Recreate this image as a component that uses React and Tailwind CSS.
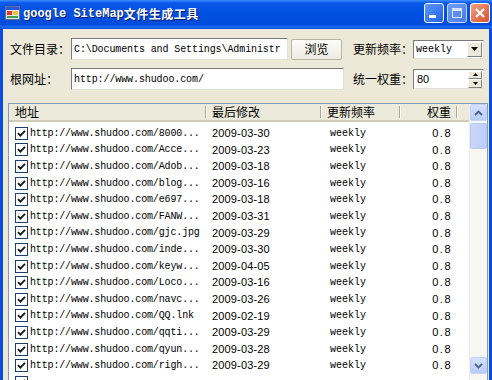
import React from "react";

const rows = [
  ["8000...", "2009-03-30"],
  ["Acce...", "2009-03-23"],
  ["Adob...", "2009-03-18"],
  ["blog...", "2009-03-16"],
  ["e697...", "2009-03-18"],
  ["FANW...", "2009-03-31"],
  ["gjc.jpg", "2009-03-29"],
  ["inde...", "2009-03-30"],
  ["keyw...", "2009-04-05"],
  ["Loco...", "2009-03-16"],
  ["navc...", "2009-03-26"],
  ["QQ.lnk", "2009-02-19"],
  ["qqti...", "2009-03-29"],
  ["qyun...", "2009-03-28"],
  ["righ...", "2009-03-29"],
];

const cjk = { fontFamily: '"Noto Sans CJK SC", "Noto Sans", sans-serif' };
const mono = { fontFamily: '"Liberation Mono", "DejaVu Sans Mono", monospace' };
const sans = { fontFamily: '"Liberation Sans", Arial, sans-serif' };

function Check() {
  return (
    <div className="w-[13px] h-[13px] border border-[#1C3F6E] bg-white flex items-center justify-center shrink-0">
      <svg width="9" height="9" viewBox="0 0 9 9">
        <path d="M1 4.2 L3.4 6.6 L8 1.8" fill="none" stroke="#1a1a1a" strokeWidth="1.9" />
      </svg>
    </div>
  );
}

function Sep() {
  return <div className="w-[2px] h-[12px] border-l border-[#ACA899] bg-white shrink-0" />;
}

function ScrollBtn({ up }) {
  return (
    <div className="h-[17px] w-full rounded-[2px] border border-[#C3D3FD] bg-[linear-gradient(to_bottom,#D5E2FE,#B6CBF9)] flex items-center justify-center">
      <svg width="9" height="6" viewBox="0 0 9 6">
        <path d={up ? "M1 5 L4.5 1.5 L8 5" : "M1 1 L4.5 4.5 L8 1"} fill="none" stroke="#4D6185" strokeWidth="1.8" />
      </svg>
    </div>
  );
}

export default function App() {
  return (
    <div className="w-[492px] h-[380px] overflow-hidden bg-[#0A4CDF] flex flex-col">
      {/* Title bar */}
      <div className="h-[29px] shrink-0 flex items-start bg-[linear-gradient(to_bottom,#3B8EFB_0%,#0A58E8_10%,#0050E0_50%,#004CDC_85%,#1C6CF2_93%,#0A48D8_100%)]">
        <div className="ml-[5px] mt-[6px] w-[15px] h-[14px]">
          <svg width="15" height="14" viewBox="0 0 15 14">
            <rect x="0.5" y="0.5" width="14" height="13" fill="#E8E8F0" stroke="#6A6A8A" />
            <rect x="1" y="1" width="13" height="3" fill="#2A5ADA" />
            <rect x="2" y="5" width="5" height="4" fill="#E23A2A" />
            <rect x="8" y="5" width="5" height="4" fill="#F3C234" />
            <rect x="2" y="10" width="11" height="2" fill="#3AA04A" />
          </svg>
        </div>
        <div className="ml-[3px] mt-[5px] flex items-center text-white font-bold leading-none h-[17px]" style={{ textShadow: "1px 1px 0 #0A1A6A" }}>
          <span className="text-[12px]" style={mono}>google SiteMap</span>
          <span className="text-[12px] tracking-[0.5px]" style={cjk}>文件生成工具</span>
        </div>
        <div className="ml-auto mr-[2px] mt-[3px] flex gap-[3px]">
          <div className="w-[20px] h-[20px] rounded-[3px] border border-white bg-[linear-gradient(135deg,#5A9BFC,#2260EA)] relative">
            <div className="absolute left-[4px] bottom-[4px] w-[7px] h-[3px] bg-white" />
          </div>
          <div className="w-[20px] h-[20px] rounded-[3px] border border-[#C8D8FA] bg-[linear-gradient(135deg,#6F9EF3,#4A7DE6)] relative">
            <div className="absolute left-[4px] top-[4px] w-[10px] h-[10px] border-[1px] border-t-[3px] border-[#D8E4FA]" />
          </div>
          <div className="w-[20px] h-[20px] rounded-[3px] border border-white bg-[linear-gradient(135deg,#F0A080,#D9532C)] flex items-center justify-center">
            <svg width="12" height="12" viewBox="0 0 12 12">
              <path d="M2 2 L10 10 M10 2 L2 10" stroke="white" strokeWidth="2.2" />
            </svg>
          </div>
        </div>
      </div>

      {/* Body */}
      <div className="flex-1 min-h-0 mx-[3px] bg-[#ECE9D8] flex flex-col pt-[9px]">
        {/* Row 1 */}
        <div className="flex items-center h-[22px] pl-[7px] pr-[5px] text-[12px] text-black">
          <div className="w-[61px] shrink-0" style={cjk}>文件目录：</div>
          <div className="w-[217px] h-[22px] shrink-0 bg-white border border-t-[#7A7A7A] border-l-[#7A7A7A] border-r-[#E4E2D6] border-b-[#E4E2D6] flex items-center overflow-hidden whitespace-nowrap pl-[2px] text-[10px] tracking-[-0.1px]" style={mono}>
            C:\Documents and Settings\Administr
          </div>
          <div className="ml-[3px] w-[51px] h-[21px] shrink-0 rounded-[2px] border border-[#B8B4A4] bg-[linear-gradient(to_bottom,#FBFBF8,#EDEBE2)] flex items-center justify-center text-[12px]" style={cjk}>
            浏览
          </div>
          <div className="ml-[11px] w-[60px] shrink-0" style={cjk}>更新频率：</div>
          <div className="w-[71px] h-[19px] shrink-0 bg-white border border-t-[#7A7A7A] border-l-[#7A7A7A] border-r-[#E4E2D6] border-b-[#E4E2D6] flex items-center">
            <span className="pl-[2px] flex-1 text-[10px]" style={mono}>weekly</span>
            <div className="w-[15px] h-[15px] mr-[1px] bg-[#ECE9D8] border border-t-white border-l-white border-r-[#808080] border-b-[#808080] flex items-center justify-center">
              <svg width="7" height="4" viewBox="0 0 7 4"><path d="M0 0 H7 L3.5 4 Z" fill="#000" /></svg>
            </div>
          </div>
        </div>

        {/* Row 2 */}
        <div className="flex items-center h-[22px] mt-[8px] pl-[7px] pr-[5px] text-[12px] text-black">
          <div className="w-[61px] shrink-0" style={cjk}>根网址：</div>
          <div className="w-[273px] h-[22px] shrink-0 bg-white border border-t-[#7A7A7A] border-l-[#7A7A7A] border-r-[#E4E2D6] border-b-[#E4E2D6] flex items-center overflow-hidden whitespace-nowrap pl-[2px] text-[10px] tracking-[-0.1px]" style={mono}>
            http://www.shudoo.com/
          </div>
          <div className="ml-[9px] w-[60px] shrink-0" style={cjk}>统一权重：</div>
          <div className="w-[71px] h-[20px] shrink-0 bg-white border border-t-[#7A7A7A] border-l-[#7A7A7A] border-r-[#E4E2D6] border-b-[#E4E2D6] flex items-center">
            <span className="pl-[3px] flex-1 text-[11px]" style={sans}>80</span>
            <div className="w-[14px] h-[17px] mr-[1px] flex flex-col">
              <div className="flex-1 bg-[#ECE9D8] border border-t-white border-l-white border-r-[#808080] border-b-[#808080] flex items-center justify-center">
                <svg width="5" height="3" viewBox="0 0 5 3"><path d="M0 3 H5 L2.5 0 Z" fill="#000" /></svg>
              </div>
              <div className="flex-1 bg-[#ECE9D8] border border-t-white border-l-white border-r-[#808080] border-b-[#808080] flex items-center justify-center">
                <svg width="5" height="3" viewBox="0 0 5 3"><path d="M0 0 H5 L2.5 3 Z" fill="#000" /></svg>
              </div>
            </div>
          </div>
        </div>

        {/* List */}
        <div className="mt-[13px] ml-[5px] mr-[1px] h-[280px] shrink-0 border border-[#7F9DB9] bg-white flex overflow-hidden">
          <div className="flex-1 min-w-0 flex flex-col">
            {/* Header */}
            <div className="h-[18px] shrink-0 flex items-center bg-[#EBEADB] border-b-[2px] border-[#D0CCBC] text-[12px] text-black" style={cjk}>
              <div className="w-[198px] shrink-0 flex items-center justify-between pl-[6px]">
                <span>地址</span><Sep />
              </div>
              <div className="w-[115px] shrink-0 flex items-center justify-between pl-[5px]">
                <span>最后修改</span><Sep />
              </div>
              <div className="w-[79px] shrink-0 flex items-center justify-between pl-[5px]">
                <span>更新频率</span><Sep />
              </div>
              <div className="w-[57px] shrink-0 flex items-center justify-end">
                <span className="mr-[5px]">权重</span><Sep />
              </div>
              <div className="flex-1" />
            </div>
            {/* Rows */}
            <div className="pt-[3px] flex flex-col">
              {rows.map(([u, d], i) => (
                <div key={i} className="h-[16.6px] shrink-0 flex items-center text-black">
                  <div className="w-[198px] shrink-0 flex items-center pl-[6px]">
                    <Check />
                    <span className="ml-[2px] text-[10px] tracking-[-0.15px] whitespace-nowrap" style={mono}>http://www.shudoo.com/{u}</span>
                  </div>
                  <div className="w-[115px] shrink-0 pl-[5px] text-[11px] tracking-[0.15px]" style={sans}>{d}</div>
                  <div className="w-[79px] shrink-0 pl-[8px] text-[10px]" style={mono}>weekly</div>
                  <div className="w-[57px] shrink-0 pr-[6px] text-right text-[11px] tracking-[1.5px]" style={sans}>0.8</div>
                </div>
              ))}
              <div className="h-[16.6px] shrink-0 flex items-center pl-[6px]">
                <Check />
              </div>
            </div>
          </div>
          {/* Scrollbar */}
          <div className="w-[18px] shrink-0 bg-[#F7F6F1] border-l border-[#EEEDE5] flex flex-col">
            <ScrollBtn up />
            <div className="h-[236px] shrink-0 pt-[2px]">
              <div className="h-[26px] rounded-[2px] border border-[#B7CAF5] bg-[linear-gradient(to_right,#C9D8FC,#BBCEFA)]" />
            </div>
            <ScrollBtn />
          </div>
        </div>
      </div>
    </div>
  );
}
